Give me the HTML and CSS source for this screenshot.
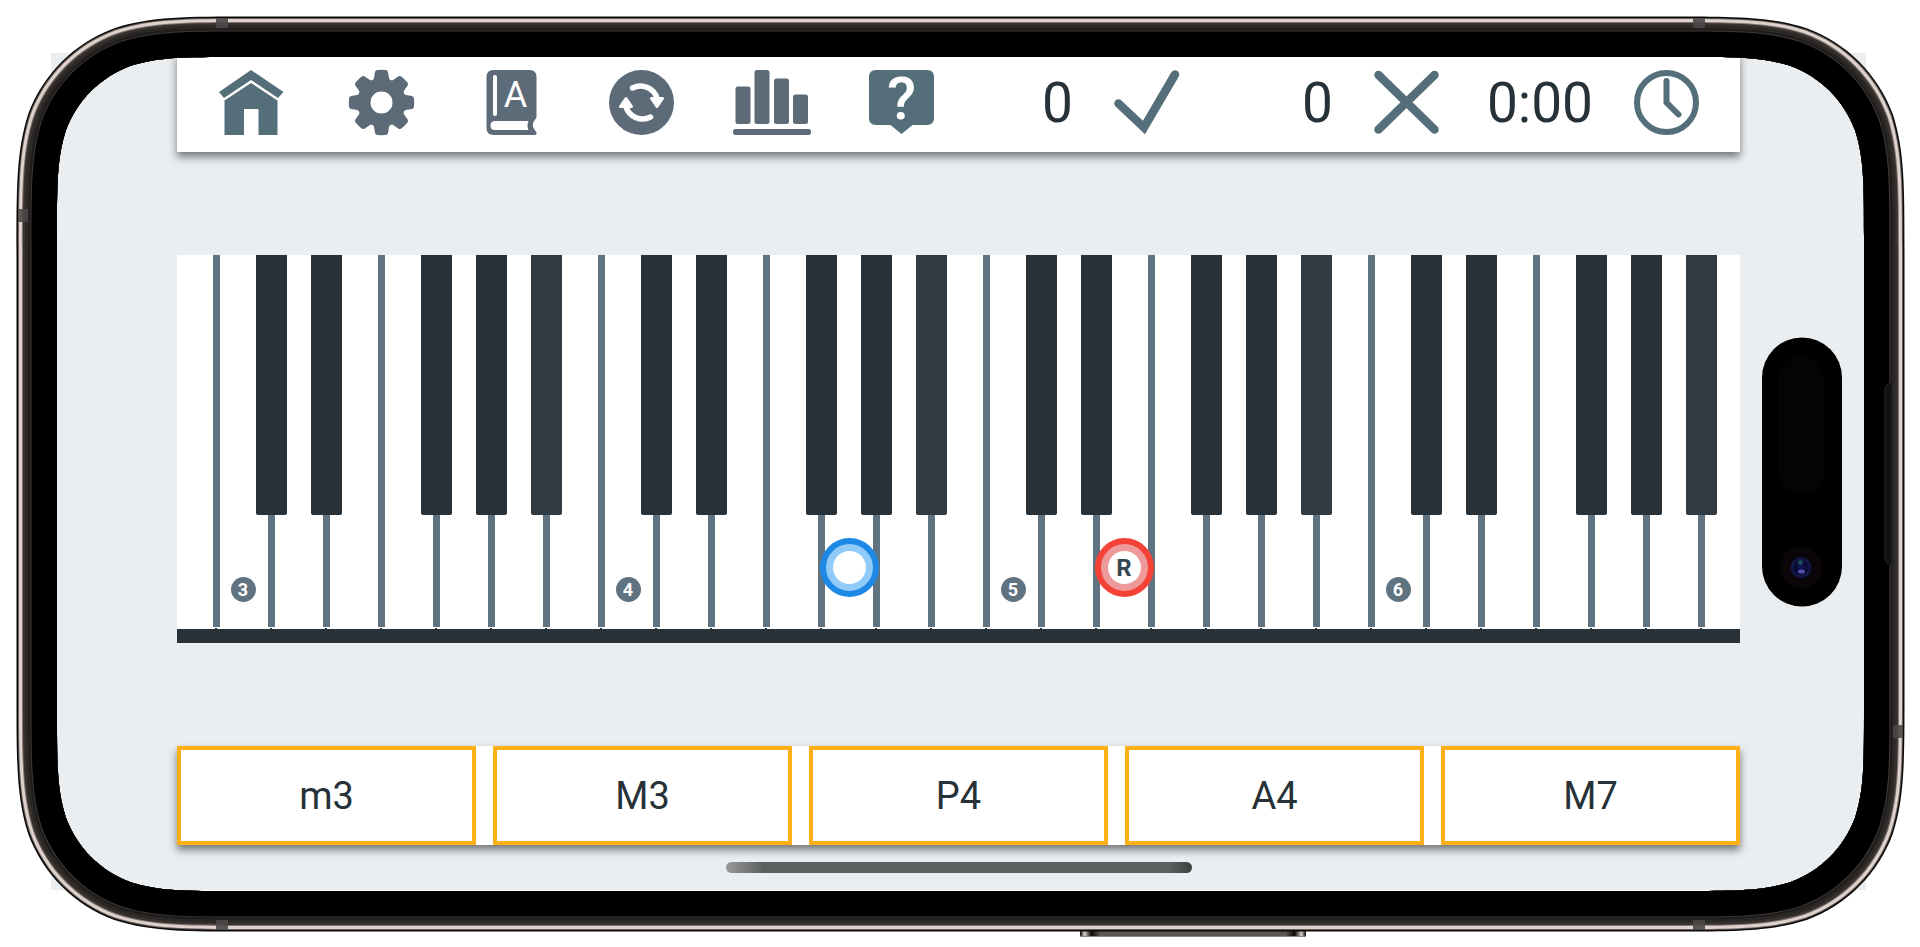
FILE: index.html
```html
<!DOCTYPE html>
<html lang="en">
<head>
  <meta charset="UTF-8" />
  <meta name="viewport" content="width=device-width, initial-scale=1.0" />
  <title>Keyboard Interval Identification</title>
  <link rel="stylesheet" href="styles.css">
</head>
<body>
  <div class="device">
    <main class="screen">
      <header class="toolbar">
        <nav class="tools">
          <button class="tool" aria-label="Home">
            <svg class="icon" viewBox="0 0 65 65"><path d="M32 0 64.500 22 59 28 32 10 5 28 0 22ZM32 13 58.500 30.500V65H39.500V39H25V65H5.500V30.500Z"/></svg>
          </button>
          <button class="tool tool-gray" aria-label="Settings">
            <svg class="icon" viewBox="0 0 65 65">
              <defs><path id="tooth" d="M28.500 0Q32.500-.3 36.500 0 38.500.2 39 2L40 8Q40.300 9.800 42 10.500L44 22H21L23 10.500Q24.700 9.800 25 8L26 2Q26.500.2 28.500 0Z"/></defs>
              <use href="#tooth"/>
              <use href="#tooth" transform="rotate(45 32.500 32.500)"/>
              <use href="#tooth" transform="rotate(90 32.500 32.500)"/>
              <use href="#tooth" transform="rotate(135 32.500 32.500)"/>
              <use href="#tooth" transform="rotate(180 32.500 32.500)"/>
              <use href="#tooth" transform="rotate(225 32.500 32.500)"/>
              <use href="#tooth" transform="rotate(270 32.500 32.500)"/>
              <use href="#tooth" transform="rotate(315 32.500 32.500)"/>
              <circle cx="32.500" cy="32.500" r="17.500" fill="none" stroke="currentColor" stroke-width="13"/>
              <circle cx="32.500" cy="32.500" r="11" fill="#fff"/>
            </svg>
          </button>
          <button class="tool tool-gray" aria-label="Key signature">
            <svg class="icon" viewBox="0 0 65 65">
              <path d="M14.500 0H50.500Q57.500 0 57.500 7V47Q57.500 48 56.500 49 51 55 56.500 61 58 62.500 57.500 64 57 65 55.500 65H14.500Q7.500 65 7.500 58V7Q7.500 0 14.500 0Z"/>
              <rect x="14" y="5" width="4" height="41" rx="2" fill="#fff"/>
              <path d="M16 51H49.500Q47.500 55.500 49.500 60H16Q11.500 60 11.500 55.500T16 51Z" fill="#fff"/>
              <text class="glyph-a" x="36.500" y="37">A</text>
            </svg>
          </button>
          <button class="tool tool-gray" aria-label="Restart">
            <svg class="icon" viewBox="0 0 65 65">
              <circle cx="32.500" cy="32.500" r="32.500"/>
              <g id="spin" fill="#fff" stroke="#fff" stroke-linejoin="round" stroke-linecap="round">
                <path d="M23.500 18A17.500 17.500 0 0 1 48.300 29" fill="none" stroke-width="5.500"/>
                <path d="M42.500 28.500H53.500L48 36.500Z" stroke-width="3"/>
              </g>
              <use href="#spin" transform="rotate(180 32.500 32.500)"/>
            </svg>
          </button>
          <button class="tool tool-gray" aria-label="Statistics">
            <svg class="icon icon-wide" viewBox="0 0 78 65">
              <rect x="2.500" y="16.500" width="15" height="37.500" rx="2.500"/>
              <rect x="21.500" y="0" width="15" height="54" rx="2.500"/>
              <rect x="41" y="8.500" width="15" height="45.500" rx="2.500"/>
              <rect x="60" y="24.500" width="15" height="29.500" rx="2.500"/>
              <rect x="0" y="59" width="78" height="6" rx="2.500"/>
            </svg>
          </button>
          <button class="tool" aria-label="Help">
            <svg class="icon" viewBox="0 0 65 65">
              <path d="M7 0H58Q65 0 65 7V48Q65 55 58 55H43.500L32.500 64 21.500 55H7Q0 55 0 48V7Q0 0 7 0Z"/>
              <text class="glyph-q" x="32.500" y="49">?</text>
            </svg>
          </button>
        </nav>
        <div class="scores">
          <div class="score">
            <span>0</span>
            <svg class="icon icon-line" viewBox="0 0 65 65" stroke-width="8.500"><path d="M4.500 33.500 30 57.500 61 4.500"/></svg>
          </div>
          <div class="score">
            <span>0</span>
            <svg class="icon icon-line" viewBox="0 0 65 65" stroke-width="8.500"><path d="M4.500 5 60.500 59.500M60.500 5 4.500 59.500"/></svg>
          </div>
          <div class="score">
            <span>0:00</span>
            <svg class="icon icon-line" viewBox="0 0 65 65" stroke-width="6"><circle cx="32.500" cy="32.500" r="29.500"/><path d="M32.500 11V32.500L44.500 44.500"/></svg>
          </div>
        </div>
      </header>

      <section class="keyboard" id="keyboard"></section>

      <section class="answers">
        <button class="answer">m3</button>
        <button class="answer">M3</button>
        <button class="answer">P4</button>
        <button class="answer">A4</button>
        <button class="answer">M7</button>
      </section>
    </main>
    <svg class="frame" id="frame" aria-hidden="true"></svg>
  </div>
  <script src="script.js"></script>
</body>
</html>
```
FILE: styles.css
```css
* { box-sizing: border-box; }
body { margin: 0; background: #fff; color: #263238; font-family: Roboto, "Liberation Sans", sans-serif; }
button { font: inherit; color: inherit; margin: 0; padding: 0; border: 0; background: none; cursor: pointer; }

.device { position: relative; overflow: hidden; padding: 53px 54px 57px 51px; }
.frame { position: absolute; top: 0; left: 0; width: 100%; height: 100%; pointer-events: none; }

.screen {
  display: flex;
  flex-direction: column;
  gap: 103px;
  padding: 0 126px 45px;
  background: #eaeef1;
}

/* toolbar */
.toolbar {
  display: flex;
  justify-content: space-between;
  padding: 17px 41px 17px 42px;
  background: #fff;
  box-shadow: 0 5px 8px rgba(0, 0, 0, 0.5);
}
.tools, .scores { display: flex; gap: 65px; }
.tool { display: flex; justify-content: center; width: 65px; height: 65px; color: #546e7a; }
.tool-gray { color: #5c6b77; }
.icon { flex: none; display: block; width: 65px; height: 65px; overflow: visible; fill: currentColor; }
.icon-wide { width: 78px; }
.icon-line { color: #546e7a; fill: none; stroke: currentColor; stroke-linecap: round; }
.glyph-a { fill: #fff; font-size: 36px; text-anchor: middle; }
.glyph-q { fill: #fff; font-size: 60px; font-weight: 500; text-anchor: middle; }
.score { display: flex; justify-content: flex-end; align-items: center; gap: 41px; width: 195px; height: 65px; font-size: 55px; line-height: 65px; }
.score span { padding-top: 2px; }

/* keyboard */
.keyboard { display: flex; height: 388px; background: #fff; border-bottom: 14px solid #283137; }
.key { position: relative; flex: 55 1 0; }
.key-part { flex-grow: 39; }
.key + .key::before { content: ""; position: absolute; top: 0; bottom: 2px; left: -3px; width: 7px; background: #607380; }
.key + .key::after { content: ""; position: absolute; bottom: 0; left: -1px; width: 2px; height: 1px; background: #283137; }
.black { position: absolute; z-index: 1; top: 0; left: -15px; width: 31px; height: 260px; border-radius: 0 0 2px 2px; background: #283137; }
.black-soft { background: #323a41; }
.octave {
  position: absolute;
  bottom: 27px;
  left: calc(50% - 13px);
  width: 25px;
  border-radius: 50%;
  background: #607380;
  color: #fff;
  font-size: 18px;
  font-weight: 700;
  line-height: 25px;
  text-align: center;
}
.note {
  position: absolute;
  z-index: 2;
  bottom: 32px;
  left: calc(50% - 29px);
  width: 59px;
  height: 59px;
  padding: 7px;
  border: 6px solid;
  border-radius: 50%;
}
.note span { display: block; height: 33px; border-radius: 50%; background: #fff; color: #37474f; font-size: 24px; font-weight: 700; line-height: 35px; text-align: center; }
.note-blue { border-color: #1e88e5; background: #90caf9; }
.note-red { border-color: #f44336; background: #ef9a9a; }

/* answer buttons */
.answers { display: grid; grid-template-columns: repeat(5, 1fr); gap: 17px; background: #fff; box-shadow: 0 5px 8px rgba(0, 0, 0, 0.5); }
.answer { height: 99px; border: 4px solid #fdb116; background: #fff; font-size: 38px; }
```
FILE: script.js
```js
// ---- keyboard: B2 (cut off) up to B6 (cut off) ----
const naturals = ['C', 'D', 'E', 'F', 'G', 'A', 'B'];
const notes = { G4: ['blue', ''], E5: ['red', 'R'] };

function buildKeyboard() {
  let html = '<div class="key key-part"></div>';
  for (let i = 0; i < 28; i++) {
    const name = naturals[i % 7];
    const octave = 3 + Math.floor(i / 7);
    const note = notes[name + octave];
    html += `<div class="key${i === 27 ? ' key-part' : ''}">`;
    // the black key sits on the line left of this white key
    if (name !== 'C' && name !== 'F') html += `<i class="black${name === 'B' ? ' black-soft' : ''}"></i>`;
    if (name === 'C') html += `<span class="octave">${octave}</span>`;
    if (note) html += `<div class="note note-${note[0]}"><span>${note[1]}</span></div>`;
    html += '</div>';
  }
  document.getElementById('keyboard').innerHTML = html;
}

// ---- phone frame ----
// rounded rectangle with smooth (continuous) corners
function shell(w, h, inset, r) {
  const l = 16.5 + inset, t = 16.5 + inset, rt = w - 15.5 - inset, b = h - 15.5 - inset;
  const pts = [[0, 1.529], [0, 1.088], [0, 0.868], [0.075, 0.631], [0.169, 0.373], [0.373, 0.169], [0.631, 0.075], [0.868, 0], [1.088, 0], [1.529, 0]];
  const corner = (cx, cy, sx, sy, flip) => {
    const p = (flip ? [...pts].reverse() : pts).map(([x, y]) => `${cx + sx * x * r} ${cy + sy * y * r}`);
    return `${p[0]}C${p.slice(1).join(' ')}`;
  };
  return `M${corner(l, t, 1, 1)}L${corner(rt, t, -1, 1, true)}L${corner(rt, b, -1, -1)}L${corner(l, b, 1, -1, true)}Z`;
}

function drawFrame() {
  const svg = document.getElementById('frame');
  const w = svg.clientWidth, h = svg.clientHeight, mid = h / 2;
  const hole = shell(w, h, 40.5, 117);
  const layers = [[0, '#0c0b0b'], [1.5, '#6b605a'], [2.5, '#ddd3cc'], [5.5, '#81766f'], [6.5, '#37322f'], [9, '#2b2725'], [12, '#1f1c1b'], [14, '#3b3a3a'], [15, '#000']];
  const sideKey = w - 840;

  let out = `
    <defs>
      <linearGradient id="bar" x1="0" x2="1"><stop offset="0" stop-color="#999"/><stop offset=".08" stop-color="#5d6060"/><stop offset=".95" stop-color="#5d6060"/><stop offset="1" stop-color="#3c4040"/></linearGradient>
      <linearGradient id="key" x1="0" x2="1"><stop offset="0" stop-color="#000"/><stop offset=".02" stop-color="#d8cdc6"/><stop offset=".05" stop-color="#0b0a0a"/><stop offset=".09" stop-color="#5c5654"/><stop offset=".91" stop-color="#5c5654"/><stop offset=".95" stop-color="#0b0a0a"/><stop offset=".98" stop-color="#d8cdc6"/><stop offset="1" stop-color="#000"/></linearGradient>
      <radialGradient id="lens"><stop offset="0" stop-color="#14165c"/><stop offset=".55" stop-color="#07082e"/><stop offset=".8" stop-color="#171a4a"/><stop offset="1" stop-color="#0b0a1c"/></radialGradient>
    </defs>
    <rect x="${sideKey}" y="${h - 17}" width="226" height="7" rx="2" fill="url(#key)"/>
    <path d="M${sideKey + 2} ${h - 10.5}h222" stroke="#8d827c"/>`;
  layers.forEach(([inset, color]) => {
    out += `<path fill="${color}" fill-rule="evenodd" d="${shell(w, h, inset, 155 - inset * 0.93)}${hole}"/>`;
  });

  // antenna bands
  const bands = [[216, 18, 12, 10], [w - 227, 18, 12, 10], [216, h - 27, 12, 10], [w - 227, h - 27, 12, 10], [18, 209, 10, 13], [w - 27, h - 222, 10, 13]];
  bands.forEach(([x, y, bw, bh]) => { out += `<rect x="${x}" y="${y}" width="${bw}" height="${bh}" fill="#4a4847" opacity=".9"/>`; });

  // ear speaker, camera island, home indicator
  out += `
    <path d="M${w - 29} ${mid - 91}q-6 2-6 8v167q0 6 6 8" fill="#111" stroke="#2a2a2a"/>
    <rect x="${w - 158}" y="${mid - 136}" width="80" height="269" rx="40"/>
    <rect x="${w - 142}" y="${mid - 117}" width="46" height="138" rx="23" fill="#040404"/>
    <circle cx="${w - 119}" cy="${mid + 94}" r="21" fill="#0a0509"/>
    <circle cx="${w - 119}" cy="${mid + 94}" r="11" fill="url(#lens)"/>
    <circle cx="${w - 119.5}" cy="${mid + 89}" r="2.5" fill="#1c4a5c"/>
    <ellipse cx="${w - 118.5}" cy="${mid + 98}" rx="3.5" ry="2" fill="#5052b0"/>
    <rect x="${w / 2 - 234}" y="${h - 85}" width="466" height="11" rx="5.5" fill="url(#bar)"/>`;
  svg.innerHTML = out;
}

buildKeyboard();
drawFrame();
window.addEventListener('resize', drawFrame);
```
